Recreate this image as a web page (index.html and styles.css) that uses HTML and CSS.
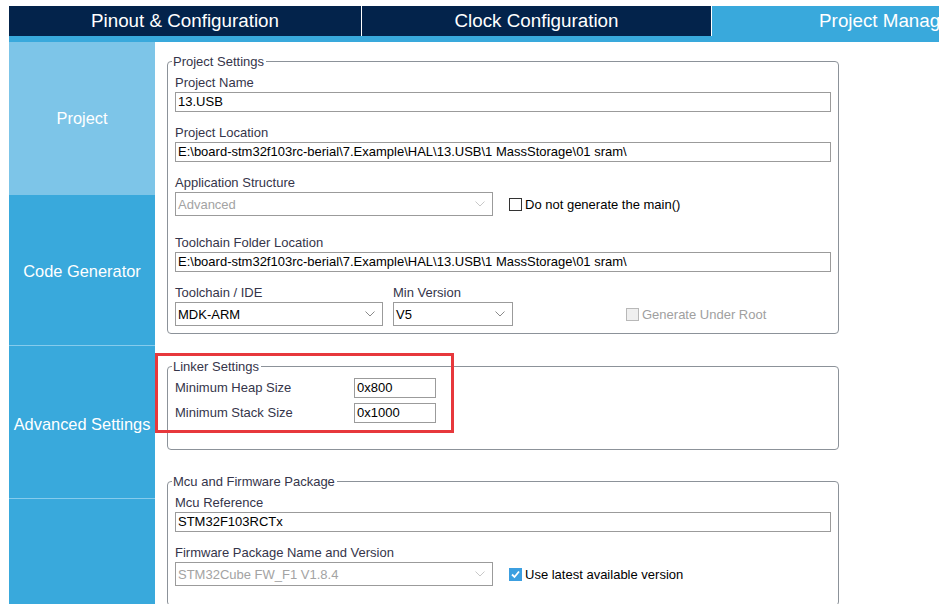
FILE: index.html
```html
<!DOCTYPE html>
<html>
<head>
<meta charset="utf-8">
<title>Project Manager</title>
<link rel="stylesheet" href="styles.css">
</head>
<body>
<div class="app">
  <nav class="tabs">
    <div class="tab">Pinout &amp; Configuration</div>
    <div class="tab t2">Clock Configuration</div>
    <div class="tab active">Project Manager</div>
  </nav>
  <div class="strip"></div>
  <div class="body">
    <aside class="side">
      <div class="side-item active">Project</div>
      <div class="side-item s2">Code Generator</div>
      <div class="side-item s3">Advanced Settings</div>
      <div class="side-item last"></div>
    </aside>
    <main class="main">
      <fieldset class="group g-project">
        <legend>Project Settings</legend>
        <div class="field">
          <div class="label">Project Name</div>
          <div class="input">13.USB</div>
        </div>
        <div class="field">
          <div class="label">Project Location</div>
          <div class="input">E:\board-stm32f103rc-berial\7.Example\HAL\13.USB\1 MassStorage\01 sram\</div>
        </div>
        <div class="field tall">
          <div class="label">Application Structure</div>
          <div class="inline">
            <div class="select disabled w-app"><span>Advanced</span><svg class="chev" width="10" height="6" viewBox="0 0 10 6"><polyline points="0.5,0.5 5,5 9.5,0.5"/></svg></div>
            <div class="check"><span class="box"></span><span>Do not generate the main()</span></div>
          </div>
        </div>
        <div class="field">
          <div class="label">Toolchain Folder Location</div>
          <div class="input">E:\board-stm32f103rc-berial\7.Example\HAL\13.USB\1 MassStorage\01 sram\</div>
        </div>
        <div class="field last">
          <div class="inline top">
            <div class="col">
              <div class="label">Toolchain / IDE</div>
              <div class="select w-ide"><span>MDK-ARM</span><svg class="chev" width="10" height="6" viewBox="0 0 10 6"><polyline points="0.5,0.5 5,5 9.5,0.5"/></svg></div>
            </div>
            <div class="col">
              <div class="label">Min Version</div>
              <div class="select w-ver"><span>V5</span><svg class="chev" width="10" height="6" viewBox="0 0 10 6"><polyline points="0.5,0.5 5,5 9.5,0.5"/></svg></div>
            </div>
            <div class="check disabled root"><span class="box"></span><span>Generate Under Root</span></div>
          </div>
        </div>
      </fieldset>

      <fieldset class="group g-linker">
        <legend>Linker Settings</legend>
        <div class="linker">
          <div class="lk-label">Minimum Heap Size</div>
          <div class="input">0x800</div>
          <div class="lk-label">Minimum Stack Size</div>
          <div class="input">0x1000</div>
        </div>
      </fieldset>

      <fieldset class="group g-mcu">
        <legend>Mcu and Firmware Package</legend>
        <div class="field">
          <div class="label">Mcu Reference</div>
          <div class="input">STM32F103RCTx</div>
        </div>
        <div class="field">
          <div class="label">Firmware Package Name and Version</div>
          <div class="inline">
            <div class="select disabled w-app"><span>STM32Cube FW_F1 V1.8.4</span><svg class="chev" width="10" height="6" viewBox="0 0 10 6"><polyline points="0.5,0.5 5,5 9.5,0.5"/></svg></div>
            <div class="check checked"><span class="box"><svg width="11" height="11" viewBox="0 0 11 11"><polyline points="2,5.5 4.5,8 9,2.5"/></svg></span><span>Use latest available version</span></div>
          </div>
        </div>
      </fieldset>

      <div class="highlight"></div>
    </main>
  </div>
</div>
</body>
</html>
```

FILE: styles.css
```css
* { box-sizing: border-box; }
html, body {
  margin: 0;
  height: 100%;
  overflow: hidden;
  background: #fff;
}
body {
  font-family: "Liberation Sans", Arial, sans-serif;
}
.app {
  padding: 6px 0 0 9px;
  width: 1100px;
}
.tabs {
  display: flex;
  gap: 1px;
  height: 30px;
}
.tab {
  flex: 0 0 352px;
  background: #03234b;
  color: #fff;
  font-size: 18.8px;
  display: flex;
  align-items: center;
  justify-content: center;
  white-space: nowrap;
}
.tab.t2 { flex-basis: 349px; }
.tab.active { background: #39a9dc; }
.strip {
  height: 6px;
  background: #39a9dc;
}
.body {
  display: flex;
  height: 562px;
}
.side {
  flex: 0 0 146px;
  background: #39a9dc;
}
.side-item {
  height: 153px;
  border-bottom: 1px solid #86cbec;
  display: flex;
  align-items: center;
  justify-content: center;
  color: #fff;
  font-size: 16.4px;
}
.side-item.active {
  background: #7dc5e8;
  border-bottom-color: #7dc5e8;
}
.side-item.s2 { height: 151px; padding-top: 3px; }
.side-item.s3 { height: 153px; padding-top: 5px; }
.side-item.last { border-bottom: none; }
.main {
  flex: 1;
  position: relative;
  padding: 12px 0 0 12px;
  color: #35354a;
  font-size: 13px;
}
fieldset.group {
  width: 672px;
  margin: 0;
  border: 1px solid #8c9299;
  border-radius: 4px;
  padding: 5px 7px 7px 7px;
  min-width: 0;
}
legend {
  padding: 0 2px 0 1px;
  margin-left: -3px;
  line-height: 15px;
  font-size: 13px;
}
fieldset.g-linker { margin-top: 25px; padding-top: 4px; padding-bottom: 26px; }
fieldset.g-mcu { margin-top: 24px; padding-top: 5px; }
.field { margin-bottom: 12px; }
.field.tall { margin-bottom: 18px; }
.field.last { margin-bottom: 0; }
.label {
  height: 18px;
  line-height: 17px;
  white-space: nowrap;
}
.input {
  height: 20px;
  border: 1px solid #9b9b9b;
  line-height: 18px;
  padding-left: 2px;
  color: #000;
  white-space: nowrap;
  overflow: hidden;
  background: #fff;
}
.select {
  height: 24px;
  border: 1px solid #9b9b9b;
  display: flex;
  align-items: center;
  justify-content: space-between;
  padding: 0 7px 0 2px;
  color: #000;
  background: #fff;
  white-space: nowrap;
}
.select .chev polyline {
  fill: none;
  stroke: #8a8a8a;
  stroke-width: 1;
}
.select.disabled { color: #a3a3a3; }
.select.disabled .chev polyline { stroke: #c8c8c8; }
.w-app { width: 318px; }
.w-ide { width: 208px; }
.w-ver { width: 120px; }
.inline {
  display: flex;
  align-items: center;
}
.inline.top { align-items: flex-end; }
.col + .col { margin-left: 10px; }
.w-app + .check { margin-left: 16px; }
.check {
  display: flex;
  align-items: center;
  gap: 3px;
  color: #000;
  height: 24px;
  white-space: nowrap;
}
.check .box {
  width: 13px;
  height: 13px;
  border: 1px solid #333;
  background: #fff;
  display: flex;
  align-items: center;
  justify-content: center;
}
.check.disabled { color: #a0a0a0; }
.check.disabled .box {
  border-color: #b8b8b8;
  background: #efefef;
}
.check.root { margin-left: 113px; }
.check.checked .box {
  border-color: #3c9fe0;
  background: #3c9fe0;
}
.check.checked .box polyline {
  fill: none;
  stroke: #fff;
  stroke-width: 1.8;
}
.linker {
  display: grid;
  grid-template-columns: 179px 82px;
  grid-auto-rows: 20px;
  row-gap: 5px;
}
.lk-label {
  line-height: 20px;
  white-space: nowrap;
}
.highlight {
  position: absolute;
  left: 0;
  top: 311px;
  width: 299px;
  height: 80px;
  border: 3px solid #e7383c;
  pointer-events: none;
}
```
